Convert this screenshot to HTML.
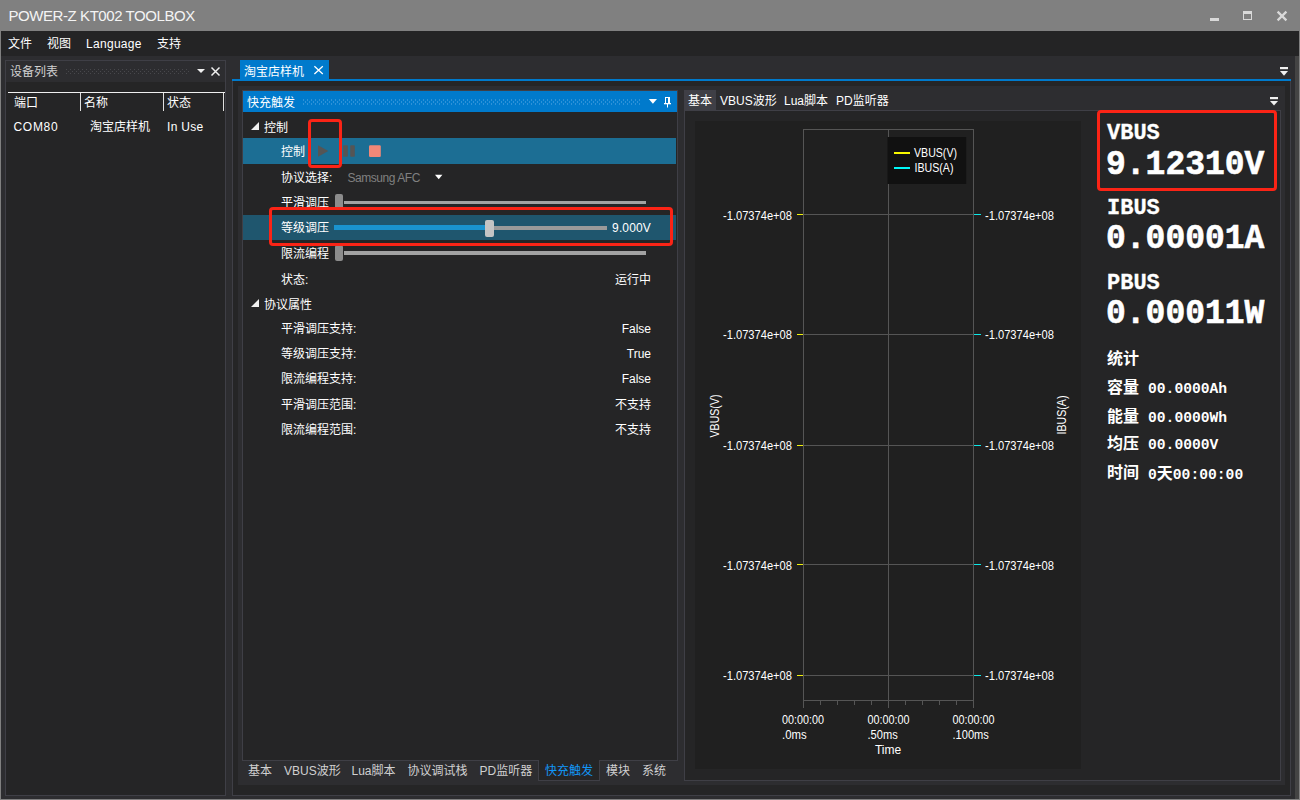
<!DOCTYPE html>
<html lang="zh-CN">
<head>
<meta charset="utf-8">
<title>POWER-Z KT002 TOOLBOX</title>
<style>
*{box-sizing:border-box;margin:0;padding:0}
html,body{width:1300px;height:800px;overflow:hidden;background:#2d2d30}
body{position:relative;font-family:"Liberation Sans","Noto Sans CJK SC",sans-serif;font-size:12px;color:#fff;line-height:16px}
.a{position:absolute}
.t{position:absolute;white-space:nowrap;line-height:16px;height:16px}
.r{text-align:right}
.mono{font-family:"Liberation Mono","Noto Sans CJK SC",monospace;font-weight:bold}
.cjkb{font-family:"Liberation Sans","Noto Sans CJK SC",sans-serif;font-weight:bold}
.red{position:absolute;border:3px solid #fb2416;border-radius:4px}
</style>
</head>
<body>
<!-- window frame -->
<div class="a" style="left:0;top:0;width:1300px;height:31px;background:#808080"></div>
<div class="a" style="left:0;top:31px;width:1px;height:769px;background:#808080"></div>
<div class="a" style="left:1299px;top:31px;width:1px;height:769px;background:#808080"></div>
<div class="a" style="left:0;top:799px;width:1300px;height:1px;background:#808080"></div>
<div class="t" id="title" style="left:8.5px;top:6px;font-size:15px;line-height:20px;height:20px;color:#f4f4f4;letter-spacing:-0.43px">POWER-Z KT002 TOOLBOX</div>
<!-- window buttons -->
<svg class="a" style="left:1200px;top:0" width="100" height="31" viewBox="0 0 100 31">
  <rect x="10" y="18" width="9" height="3" fill="#d9d9d9"/>
  <rect x="43.5" y="11.5" width="8" height="8" fill="none" stroke="#d9d9d9" stroke-width="1"/>
  <rect x="43" y="11" width="9" height="3" fill="#d9d9d9"/>
  <path d="M77.6 11.6 L86.4 20.4 M86.4 11.6 L77.6 20.4" stroke="#d9d9d9" stroke-width="2.2" fill="none"/>
</svg>
<!-- menu bar -->
<div class="a" style="left:1px;top:31px;width:1298px;height:25px;background:#242425"></div>
<div class="t" style="left:8px;top:36px">文件</div>
<div class="t" style="left:47px;top:36px">视图</div>
<div class="t" id="mlang" style="left:86px;top:36px;letter-spacing:0.3px">Language</div>
<div class="t" style="left:157px;top:36px">支持</div>
<!-- right strip -->
<div class="a" style="left:1295px;top:56px;width:4px;height:743px;background:#444444"></div>

<!-- LEFT PANEL: device list -->
<div class="a" style="left:5px;top:60px;width:221px;height:736px;border:1px solid #3f3f46;background:#252526"></div>
<div class="a" style="left:6px;top:61px;width:219px;height:21px;background:#2d2d30"></div>
<div class="t" style="left:10px;top:64px;color:#d0d0d0">设备列表</div>
<svg class="a" style="left:66px;top:69px" width="124" height="5"><defs><pattern id="gp" width="4" height="4" patternUnits="userSpaceOnUse"><rect x="0" y="0" width="1" height="1" fill="#48484c"/><rect x="2" y="2" width="1" height="1" fill="#48484c"/></pattern><pattern id="gp2" width="4" height="4" patternUnits="userSpaceOnUse"><rect x="0" y="0" width="1" height="2" fill="#2e92d8"/><rect x="2" y="2" width="1" height="2" fill="#2e92d8"/></pattern></defs><rect width="124" height="5" fill="url(#gp)"/></svg>
<svg class="a" style="left:195px;top:64px" width="30" height="14" viewBox="0 0 30 14">
  <path d="M2 5 L10 5 L6 9 Z" fill="#f0f0f0"/>
  <path d="M16.5 3.5 L24.5 11.5 M24.5 3.5 L16.5 11.5" stroke="#f0f0f0" stroke-width="1.5" fill="none"/>
</svg>
<!-- table -->
<div class="a" style="left:8px;top:92px;width:217px;height:1px;background:#f0f0f0"></div>
<div class="a" style="left:80px;top:93px;width:1px;height:18px;background:#e0e0e0"></div>
<div class="a" style="left:163px;top:93px;width:1px;height:18px;background:#e0e0e0"></div>
<div class="a" style="left:223px;top:93px;width:1px;height:18px;background:#e0e0e0"></div>
<div class="t" style="left:14px;top:95px">端口</div>
<div class="t" style="left:84px;top:95px">名称</div>
<div class="t" style="left:167px;top:95px">状态</div>
<div class="t" style="left:13.5px;top:119px;letter-spacing:0.7px">COM80</div>
<div class="t" style="left:90px;top:119px">淘宝店样机</div>
<div class="t" style="left:167px;top:119px;letter-spacing:0.3px">In Use</div>

<!-- DOCUMENT PANE -->
<div class="a" style="left:232px;top:79px;width:1059px;height:717px;border:1px solid #3f3f46;background:#252526"></div>
<div class="a" style="left:232px;top:79px;width:1059px;height:2px;background:#007acc"></div>
<div class="a" style="left:240px;top:60px;width:89px;height:20px;background:#007acc"></div>
<div class="t" style="left:244px;top:63.5px">淘宝店样机</div>
<svg class="a" style="left:312px;top:64px" width="12" height="12" viewBox="0 0 12 12"><path d="M2.4 2.3 L10.8 10 M10.8 2.3 L2.4 10" stroke="#fff" stroke-width="1.3" fill="none"/></svg>
<svg class="a" style="left:1279px;top:65.5px" width="10" height="11" viewBox="0 0 10 11"><rect x="1" y="1" width="8" height="2.2" fill="#f0f0f0"/><path d="M1 5 L9 5 L5 9.7 Z" fill="#f0f0f0"/></svg>
<!-- inner dock area -->
<div class="a" style="left:238px;top:86px;width:1047px;height:699px;background:#2d2d30"></div>

<!-- INNER LEFT PANEL: 快充触发 -->
<div class="a" style="left:242px;top:90px;width:436px;height:671px;border:1px solid #3f3f46;background:#252526"></div>
<div class="a" style="left:243px;top:91px;width:434px;height:21px;background:#007acc"></div>
<div class="t" style="left:247px;top:95px">快充触发</div>
<svg class="a" style="left:303px;top:99px" width="337" height="6"><rect width="337" height="6" fill="url(#gp2)"/></svg>
<svg class="a" style="left:648px;top:95px" width="28" height="14" viewBox="648 95 28 14">
  <path d="M648.8 99 L657 99 L652.9 103.8 Z" fill="#fff"/>
  <rect x="665" y="97" width="1" height="6" fill="#fff"/><rect x="665" y="97" width="5" height="1" fill="#fff"/><rect x="668" y="97" width="2" height="6" fill="#fff"/>
  <rect x="664" y="103" width="7" height="1.3" fill="#fff"/><rect x="667" y="104" width="1" height="3.5" fill="#fff"/>
</svg>

<!-- categories & rows -->
<svg class="a" style="left:251px;top:122px" width="8" height="8" viewBox="0 0 8 8"><path d="M8 0 L8 8 L0 8 Z" fill="#f0f0f0"/></svg>
<div class="t" style="left:264px;top:120px">控制</div>
<div class="a" style="left:243px;top:138px;width:433px;height:26px;background:#1c6e94"></div>
<div class="t" style="left:281px;top:144px">控制</div>
<svg class="a" style="left:316px;top:144px" width="68" height="14" viewBox="0 0 68 14">
  <path d="M2 1.2 L12.3 7 L2 12.8 Z" fill="#555"/>
  <rect x="27.2" y="1.2" width="4.6" height="11.6" rx="0.8" fill="#555"/>
  <rect x="34.2" y="1.2" width="4.6" height="11.6" rx="0.8" fill="#555"/>
  <rect x="53" y="1.2" width="11.8" height="11.8" rx="1.2" fill="#f08878"/>
</svg>
<div class="t" style="left:281px;top:170px">协议选择:</div>
<div class="t" id="afc" style="left:347.5px;top:170px;color:#808080;letter-spacing:-0.45px">Samsung AFC</div>
<svg class="a" style="left:434px;top:174px" width="10" height="6" viewBox="0 0 10 6"><path d="M1 0.8 L8.4 0.8 L4.7 5.2 Z" fill="#fff"/></svg>

<div class="t" style="left:281px;top:195px">平滑调压</div>
<div class="a" style="left:344px;top:200.5px;width:302px;height:3.5px;background:#a2a2a2"></div>
<div class="a" style="left:335px;top:194px;width:8px;height:16px;background:#8c8c8c;border-radius:2px"></div>

<div class="a" style="left:243px;top:215px;width:433px;height:25px;background:#1f566e"></div>
<div class="t" style="left:281px;top:220px">等级调压</div>
<div class="a" style="left:334px;top:225px;width:153px;height:5px;background:#1a93ce"></div>
<div class="a" style="left:490px;top:225.5px;width:117px;height:4px;background:#9a9a9a"></div>
<div class="a" style="left:485px;top:219.5px;width:8.5px;height:17px;background:#c4c4c4;border-radius:2px"></div>
<div class="t r" style="left:571px;width:80px;top:220px;letter-spacing:0.15px">9.000V</div>

<div class="t" style="left:281px;top:246px">限流编程</div>
<div class="a" style="left:344px;top:251px;width:302px;height:3.5px;background:#a2a2a2"></div>
<div class="a" style="left:335px;top:245px;width:8px;height:16px;background:#8c8c8c;border-radius:2px"></div>

<div class="t" style="left:281px;top:272px">状态:</div>
<div class="t r" style="left:571px;width:80px;top:272px">运行中</div>

<svg class="a" style="left:251px;top:299px" width="8" height="8" viewBox="0 0 8 8"><path d="M8 0 L8 8 L0 8 Z" fill="#f0f0f0"/></svg>
<div class="t" style="left:264px;top:297px">协议属性</div>
<div class="t" style="left:281px;top:321px">平滑调压支持:</div><div class="t r" style="left:571px;width:80px;top:321px">False</div>
<div class="t" style="left:281px;top:346px">等级调压支持:</div><div class="t r" style="left:571px;width:80px;top:346px">True</div>
<div class="t" style="left:281px;top:371px">限流编程支持:</div><div class="t r" style="left:571px;width:80px;top:371px">False</div>
<div class="t" style="left:281px;top:397px">平滑调压范围:</div><div class="t r" style="left:571px;width:80px;top:397px">不支持</div>
<div class="t" style="left:281px;top:422px">限流编程范围:</div><div class="t r" style="left:571px;width:80px;top:422px">不支持</div>

<!-- red annotation boxes (left) -->
<div class="red" style="left:308px;top:119px;width:34px;height:49px"></div>
<div class="red" style="left:269px;top:207px;width:404px;height:39px"></div>

<!-- bottom tabs -->
<div class="a" style="left:538px;top:760px;width:62px;height:21px;background:#252526;border:1px solid #3f3f46;border-top:none"></div>
<div class="t" style="left:248px;top:763px;color:#d0d0d0">基本</div>
<div class="t" style="left:284px;top:763px;color:#d0d0d0">VBUS波形</div>
<div class="t" style="left:351.5px;top:763px;color:#d0d0d0">Lua脚本</div>
<div class="t" style="left:407.5px;top:763px;color:#d0d0d0">协议调试栈</div>
<div class="t" style="left:479.5px;top:763px;color:#d0d0d0">PD监听器</div>
<div class="t" style="left:545px;top:763px;color:#1297f7">快充触发</div>
<div class="t" style="left:606px;top:763px;color:#d0d0d0">模块</div>
<div class="t" style="left:642px;top:763px;color:#d0d0d0">系统</div>

<!-- INNER RIGHT PANEL -->
<div class="a" style="left:684px;top:110px;width:597px;height:671px;border:1px solid #3f3f46;background:#252526"></div>
<div class="a" style="left:684px;top:90px;width:32px;height:20px;background:#3f3f46"></div>
<div class="t" style="left:688px;top:93px">基本</div>
<div class="t" style="left:720px;top:93px">VBUS波形</div>
<div class="t" style="left:784px;top:93px">Lua脚本</div>
<div class="t" style="left:836px;top:93px">PD监听器</div>
<svg class="a" style="left:1269px;top:96px" width="10" height="11" viewBox="0 0 10 11"><rect x="1" y="1" width="8" height="2.2" fill="#f0f0f0"/><path d="M1 5 L9 5 L5 9.5 Z" fill="#f0f0f0"/></svg>

<!-- CHART -->
<svg class="a" id="chart" style="left:695px;top:121px" width="386" height="648" viewBox="695 121 386 648" font-family="'Liberation Sans',sans-serif" font-size="12" fill="#fff">
  <rect x="695" y="121" width="386" height="648" fill="#202020"/>
  <path d="M803.5 129 V708 M888.5 129 V708 M973.5 129 V708 M803 129.5 H974 M803 700.5 H974 M803 214.5 H974 M803 334.5 H974 M803 445.5 H974 M803 564.5 H974 M803 675.5 H974 M820.5 701 V705 M837.5 701 V705 M854.5 701 V705 M871.5 701 V705 M905.5 701 V705 M922.5 701 V705 M939.5 701 V705 M956.5 701 V705" stroke="#555555" stroke-width="1" fill="none" shape-rendering="crispEdges"/>
  <path d="M797 214.5 H803 M797 334.5 H803 M797 445.5 H803 M797 564.5 H803 M797 675.5 H803" stroke="#f2f20c" stroke-width="1" shape-rendering="crispEdges"/>
  <path d="M974 214.5 H981 M974 334.5 H981 M974 445.5 H981 M974 564.5 H981 M974 675.5 H981" stroke="#0ce8e8" stroke-width="1" shape-rendering="crispEdges"/>
  <rect x="887.5" y="137" width="78.7" height="47" fill="#111111"/>
  <rect x="894" y="152" width="16" height="2" fill="#f8f800"/>
  <rect x="894" y="167" width="16" height="2" fill="#00f8f8"/>
  <text x="914" y="157" textLength="43" lengthAdjust="spacingAndGlyphs">VBUS(V)</text>
  <text x="914.5" y="172" textLength="39" lengthAdjust="spacingAndGlyphs">IBUS(A)</text>
  <text x="723" y="220" textLength="69" lengthAdjust="spacingAndGlyphs">-1.07374e+08</text>
  <text x="985" y="220" textLength="69" lengthAdjust="spacingAndGlyphs">-1.07374e+08</text>
  <text x="723" y="339" textLength="69" lengthAdjust="spacingAndGlyphs">-1.07374e+08</text>
  <text x="985" y="339" textLength="69" lengthAdjust="spacingAndGlyphs">-1.07374e+08</text>
  <text x="723" y="450" textLength="69" lengthAdjust="spacingAndGlyphs">-1.07374e+08</text>
  <text x="985" y="450" textLength="69" lengthAdjust="spacingAndGlyphs">-1.07374e+08</text>
  <text x="723" y="570" textLength="69" lengthAdjust="spacingAndGlyphs">-1.07374e+08</text>
  <text x="985" y="570" textLength="69" lengthAdjust="spacingAndGlyphs">-1.07374e+08</text>
  <text x="723" y="680" textLength="69" lengthAdjust="spacingAndGlyphs">-1.07374e+08</text>
  <text x="985" y="680" textLength="69" lengthAdjust="spacingAndGlyphs">-1.07374e+08</text>
  <text x="782" y="724" textLength="42" lengthAdjust="spacingAndGlyphs">00:00:00</text>
  <text x="782" y="739" textLength="24.6" lengthAdjust="spacingAndGlyphs">.0ms</text>
  <text x="867.5" y="724" textLength="42" lengthAdjust="spacingAndGlyphs">00:00:00</text>
  <text x="867.5" y="739" textLength="30.2" lengthAdjust="spacingAndGlyphs">.50ms</text>
  <text x="952.5" y="724" textLength="42" lengthAdjust="spacingAndGlyphs">00:00:00</text>
  <text x="952.5" y="739" textLength="36.3" lengthAdjust="spacingAndGlyphs">.100ms</text>
  <text x="888" y="754" text-anchor="middle">Time</text>
  <text transform="translate(719 416) rotate(-90)" text-anchor="middle" textLength="43" lengthAdjust="spacingAndGlyphs">VBUS(V)</text>
  <text transform="translate(1066 415) rotate(-90)" text-anchor="middle" textLength="39" lengthAdjust="spacingAndGlyphs">IBUS(A)</text>
</svg>

<!-- READOUTS -->
<div class="t mono" id="l1" style="-webkit-text-stroke:0.3px #fff;left:1107px;top:121px;font-size:22px;line-height:26px;height:26px">VBUS</div>
<div class="t mono" id="v1" style="-webkit-text-stroke:0.6px #fff;transform:scaleY(1.05);transform-origin:0 28px;left:1106px;top:146px;font-size:33px;line-height:40px;height:40px">9.12310V</div>
<div class="t mono" id="l2" style="-webkit-text-stroke:0.3px #fff;left:1107px;top:196px;font-size:22px;line-height:26px;height:26px">IBUS</div>
<div class="t mono" id="v2" style="-webkit-text-stroke:0.6px #fff;transform:scaleY(1.05);transform-origin:0 28px;left:1106px;top:220px;font-size:33px;line-height:40px;height:40px">0.00001A</div>
<div class="t mono" id="l3" style="-webkit-text-stroke:0.3px #fff;left:1107px;top:271px;font-size:22px;line-height:26px;height:26px">PBUS</div>
<div class="t mono" id="v3" style="-webkit-text-stroke:0.6px #fff;transform:scaleY(1.05);transform-origin:0 28px;left:1106px;top:295px;font-size:33px;line-height:40px;height:40px">0.00011W</div>
<div class="t cjkb" style="left:1107px;top:349px;font-size:16px;line-height:20px;height:20px">统计</div>
<div class="t cjkb" style="left:1107px;top:377.5px;font-size:16px;line-height:20px;height:20px">容量</div>
<div class="t mono" style="left:1148px;top:378.5px;font-size:14.67px;line-height:20px;height:20px">00.0000Ah</div>
<div class="t cjkb" style="left:1107px;top:407px;font-size:16px;line-height:20px;height:20px">能量</div>
<div class="t mono" style="left:1148px;top:408px;font-size:14.67px;line-height:20px;height:20px">00.0000Wh</div>
<div class="t cjkb" style="left:1107px;top:434px;font-size:16px;line-height:20px;height:20px">均压</div>
<div class="t mono" style="left:1148px;top:435px;font-size:14.67px;line-height:20px;height:20px">00.0000V</div>
<div class="t cjkb" style="left:1107px;top:463px;font-size:16px;line-height:20px;height:20px">时间</div>
<div class="t mono" style="left:1148px;top:464px;font-size:14.67px;line-height:20px;height:20px">0<span class="cjkb" style="font-size:16px">天</span>00:00:00</div>

<div class="red" style="left:1097px;top:110px;width:180px;height:81px"></div>
</body>
</html>
